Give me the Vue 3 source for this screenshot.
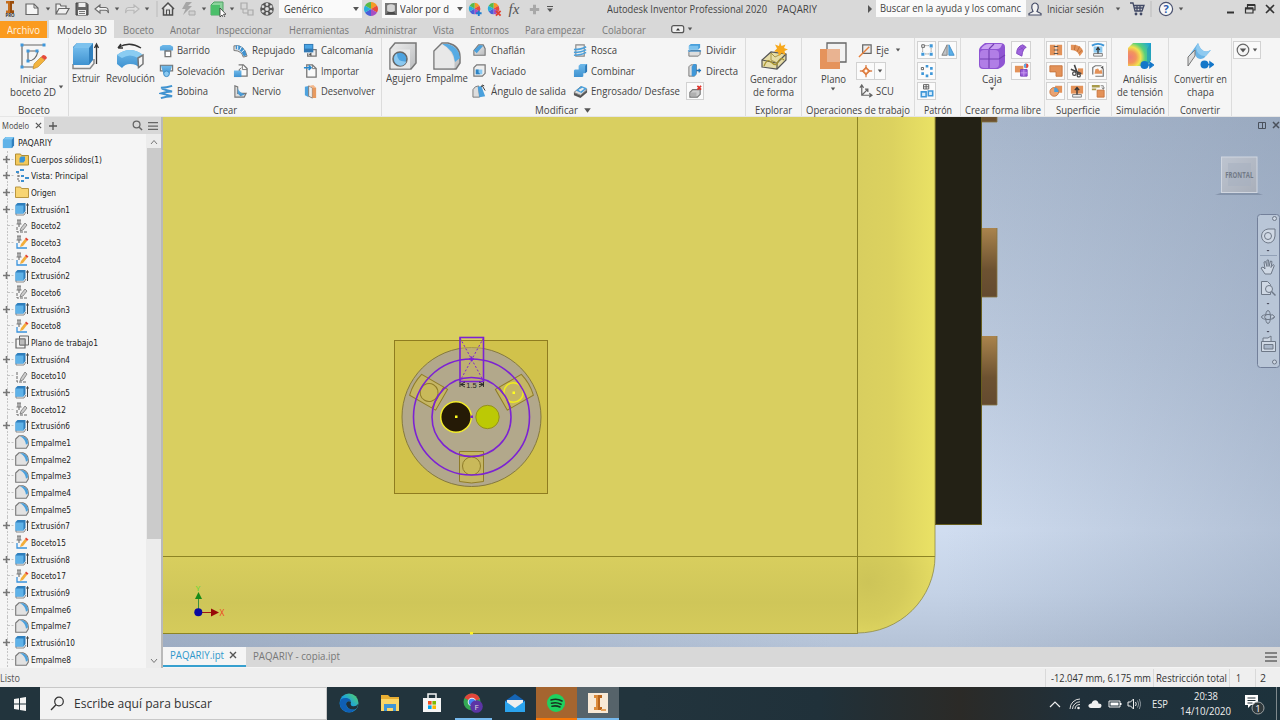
<script setup>
const vFit = {
  mounted(el, { value }) {
    const range = document.createRange()
    range.selectNodeContents(el)
    const natural = range.getBoundingClientRect().width
    if (!natural) return
    el.style.width = value + 'px'
    el.style.transform = `scaleX(${value / natural})`
  },
}

const quickLeft = [
  ['logo', 16], ['page', 16], ['caret', 6], ['folder', 16], ['save', 16], ['undo', 16], ['caret', 6],
  ['redo', 16], ['caret', 6], ['sep', 2], ['home', 16], ['flash', 16], ['caret', 6], ['select', 16],
  ['caret', 6], ['link', 16], ['ball', 16],
]
const tabs = [
  ['Boceto', 31], ['Anotar', 30], ['Inspeccionar', 56], ['Herramientas', 60], ['Administrar', 52],
  ['Vista', 21], ['Entornos', 39], ['Para empezar', 60], ['Colaborar', 44],
]
const createCols = [
  { k: 'c1', items: [['sweep', 'Barrido', 33], ['loft', 'Solevación', 48], ['coil', 'Bobina', 31]] },
  { k: 'c2', items: [['emboss', 'Repujado', 43], ['derive', 'Derivar', 32], ['rib', 'Nervio', 29]] },
  { k: 'c3', items: [['decal', 'Calcomanía', 52], ['import', 'Importar', 38], ['unwrap', 'Desenvolver', 54]] },
]
const modifyCols = [
  { k: 'm1', items: [['chamfer', 'Chaflán', 34], ['shell', 'Vaciado', 35], ['draft', 'Ángulo de salida', 75]] },
  { k: 'm2', items: [['thread', 'Rosca', 26], ['combine', 'Combinar', 44], ['thicken', 'Engrosado/ Desfase', 89]] },
]
const surface = ['stitch', 'ruled', 'extend', 'patch', 'trim', 'replace', 'sculpt', 'fitface', 'repair']

const widths = { Boceto: 30, Extrusión: 39, Empalme: 40 }
const fitWidth = (name) => {
  const m = name.match(/^(\D+?)(\d+)$/)
  return widths[m[1]] + (m[2].length - 1) * 5
}
const row = (name, icon, plus) => ({ name, icon, plus, w: fitWidth(name) })
const e = (n) => row('Extrusión' + n, 'extrude-s', true)
const f = (n) => row('Empalme' + n, 'fillet-s', false)
const b = (n, icon) => row('Boceto' + n, icon, false)
const tree = [
  { name: 'Cuerpos sólidos(1)', icon: 'solids', plus: true, w: 71 },
  { name: 'Vista: Principal', icon: 'views', plus: true, w: 57 },
  { name: 'Origen', icon: 'folder-y', plus: true, w: 25 },
  e(1), b(2, 'sk-gray'), b(3, 'sk-color'), b(4, 'sk-color'), e(2), b(6, 'sk-gray'), e(3), b(8, 'sk-color'),
  { name: 'Plano de trabajo1', icon: 'wplane', plus: false, w: 67 },
  e(4), b(10, 'sk-plain'), e(5), b(12, 'sk-gray'), e(6), f(1), f(2), f(3), f(4), f(5), e(7),
  b(15, 'sk-color'), e(8), b(17, 'sk-color'), e(9), f(6), f(7), e(10), f(8),
]
const apps = [
  { i: 'edge' }, { i: 'explorer' }, { i: 'store' }, { i: 'chrome', c: 'run', badge: 'F' }, { i: 'mail' },
  { i: 'spotify', c: 'alert' }, { i: 'inventor', c: 'active' },
]
</script>

<template>
  <div class="app">
    <svg class="defs" width="0" height="0" aria-hidden="true">
      <defs>
        <linearGradient id="gBlue" x1="0" y1="0" x2="0" y2="1"><stop offset="0" stop-color="#6fb9ea" /><stop offset="1" stop-color="#3f92d0" /></linearGradient>
        <linearGradient id="gGray" x1="0" y1="0" x2="1" y2="1"><stop offset="0" stop-color="#eeeeee" /><stop offset="1" stop-color="#b9bbbd" /></linearGradient>
        <radialGradient id="gRain" cx=".1" cy=".62" r="1"><stop offset="0" stop-color="#ee7d78" /><stop offset=".25" stop-color="#f3955c" /><stop offset=".45" stop-color="#f2e34f" /><stop offset=".65" stop-color="#57d07c" /><stop offset="1" stop-color="#1fa6d6" /></radialGradient>
        <linearGradient id="gEdge" x1="0" y1="1" x2="1" y2="0"><stop offset="0" stop-color="#1169c0" /><stop offset=".5" stop-color="#1ba1dd" /><stop offset="1" stop-color="#5bd65c" /></linearGradient>
        <symbol id="i-wheelbase" viewBox="0 0 16 16">
          <path d="M8 8V1a7 7 0 0 1 6 3.500z" fill="#f59a23" /><path d="M8 8l6-3.500a7 7 0 0 1 0 7z" fill="#e84a3c" /><path d="M8 8l6 3.500A7 7 0 0 1 8 15z" fill="#a64fc4" /><path d="M8 8v7a7 7 0 0 1-6-3.500z" fill="#4a5fd8" /><path d="M8 8l-6 3.500a7 7 0 0 1 0-7z" fill="#28aedb" /><path d="M8 8L2 4.500A7 7 0 0 1 8 1z" fill="#58b947" />
        </symbol>
      </defs>
      <symbol id="i-logo" viewBox="0 0 16 18"><path d="M4 1h8v2.500h-2v7h2V13H4v-2.500h2v-7H4z" fill="#c46d1c" /><path d="M8 1h4v2.500h-2v7h2V13H8z" fill="#9a4d0c" /></symbol>
      <symbol id="i-page" viewBox="0 0 16 16"><path d="M2 3h8l4 4v6.500H2z" fill="#f5f5f5" stroke="#666" stroke-width="1.200" /><path d="M10 3v4h4" fill="none" stroke="#666" /></symbol>
      <symbol id="i-caret" viewBox="0 0 6 6"><path d="M.8 1.500h4.400L3 4.500z" fill="#555" /></symbol>
      <symbol id="i-folder" viewBox="0 0 16 16"><path d="M2 13V3h4l1 2h5v2.500M2 13L5 7.500h10L12 13z" fill="#f0f0f0" stroke="#666" stroke-width="1.200" /></symbol>
      <symbol id="i-save" viewBox="0 0 16 16"><path d="M2 2h10.500L14 3.500V14H2z" fill="#666" stroke="#444" /><path d="M4.500 2h7v4h-7zM4 9h8v5H4z" fill="#eee" /><path d="M5 10.500h6M5 12.500h6" stroke="#777" /></symbol>
      <symbol id="i-undo" viewBox="0 0 16 16"><path d="M1 8l5-4v2.500h5.500q3 0 3 5.500-1-2.800-3-2.800H6V12z" fill="#f3f3f3" stroke="#6b6b6b" stroke-width="1.100" /></symbol>
      <symbol id="i-redo" viewBox="0 0 16 16"><path d="M15 8l-5-4v2.500H4.500q-3 0-3 5.500 1-2.800 3-2.800H10V12z" fill="#e0e0e0" stroke="#b5b5b5" stroke-width="1.100" /></symbol>
      <symbol id="i-sep" viewBox="0 0 2 16"><path d="M1 0v16" stroke="#bbb" /></symbol>
      <symbol id="i-home" viewBox="0 0 16 16"><path d="M2 8l6-6 6 6M3.500 7.500V14h9V7.500" fill="#e9e9e9" stroke="#4d4d4d" stroke-width="1.500" /><path d="M6.500 14V9h3v5" fill="none" stroke="#4d4d4d" stroke-width="1.200" /></symbol>
      <symbol id="i-flash" viewBox="0 0 16 16"><path d="M6 1h6L8 5h4l-9 9 2.500-6H2z" fill="#a6a6a6" /><path d="M9 10h6v4H9z" fill="#d0d0d0" stroke="#aaa" /></symbol>
      <symbol id="i-select" viewBox="0 0 16 16"><path d="M1 4l3-3h9v10l-3 3H1z" fill="#8bd39c" stroke="#4ea265" /><path d="M1 4h9v10H1z" fill="#4cbf6b" /><path d="M10 7v9l2-2 1.500 3 1.500-.7-1.500-3H16z" fill="#fff" stroke="#333" stroke-width=".8" /></symbol>
      <symbol id="i-link" viewBox="0 0 16 16"><path d="M2 2h6v6H2zM9 9h5v5H9z" fill="#d7d7d7" stroke="#a5a5a5" stroke-width="1.200" /><path d="M4 8v4h5" fill="none" stroke="#a5a5a5" /></symbol>
      <symbol id="i-ball" viewBox="0 0 16 16"><circle cx="8" cy="8" r="6.800" fill="#555" /><g fill="#ddd"><circle cx="8" cy="8" r="1.900" /><circle cx="8" cy="3.500" r="1.400" /><circle cx="8" cy="12.500" r="1.400" /><circle cx="4" cy="5.700" r="1.400" /><circle cx="12" cy="5.700" r="1.400" /><circle cx="4" cy="10.300" r="1.400" /><circle cx="12" cy="10.300" r="1.400" /></g></symbol>
      <symbol id="i-wheel" viewBox="0 0 16 16"><use href="#i-wheelbase" /></symbol>
      <symbol id="i-wheelplus" viewBox="0 0 16 16"><use href="#i-wheelbase" width="14" height="14" /><path d="M11.500 9v6M8.500 12h6" stroke="#1c7bd0" stroke-width="2" /></symbol>
      <symbol id="i-wheelx" viewBox="0 0 16 16"><use href="#i-wheelbase" width="14" height="14" /><path d="M9.500 9.500l5 5m0-5l-5 5" stroke="#e2402f" stroke-width="2" /></symbol>
      <symbol id="i-plus" viewBox="0 0 16 16"><path d="M8 3v10M3 8h10" stroke="#a8a8a8" stroke-width="3.200" /></symbol>
      <symbol id="i-caretbar" viewBox="0 0 8 8"><path d="M1 1.500h6" stroke="#555" /><path d="M1 3.500h6L4 7z" fill="#555" /></symbol>
      <symbol id="i-material" viewBox="0 0 14 14"><path d="M0 0h14v14H0z" fill="#777" /><path d="M2.500 3q4.500-3 9 0v6q-4.500 3-9 0z" fill="#d5d5d5" /><path d="M1 13.500l2.500-3h7l2.500 3z" fill="#4a4a4a" /></symbol>
      <symbol id="i-user" viewBox="0 0 16 16"><path d="M2 14v-1.500l4-2Q4 7 5 4q3-4 6 0 1 3-1 6.500l4 2V14z" fill="#f2f2f2" stroke="#444b66" stroke-width="1.200" /></symbol>
      <symbol id="i-cart" viewBox="0 0 16 16"><path d="M1 2h3l2 8h7l2-5.500H5M5 7h9M8 5v5m3-5v5" fill="none" stroke="#424a66" stroke-width="1.300" /><circle cx="7" cy="13" r="1.400" fill="#424a66" /><circle cx="12" cy="13" r="1.400" fill="#424a66" /></symbol>
      <symbol id="i-help" viewBox="0 0 16 16"><circle cx="8" cy="8" r="6.600" fill="#f8f8f8" stroke="#4a5270" stroke-width="1.200" /></symbol>
      <symbol id="i-min" viewBox="0 0 12 12"><path d="M3 9.500h7" stroke="#333" stroke-width="2" /></symbol>
      <symbol id="i-restore" viewBox="0 0 12 12"><path d="M3.500 5V2h7.500v5H9M1.500 5h7.500v5H1.500z" fill="none" stroke="#333" stroke-width="1.200" /><path d="M3 2h8M1 5.500h8" stroke="#333" stroke-width="2" /></symbol>
      <symbol id="i-x" viewBox="0 0 12 12"><path d="M2 2l8 8m0-8l-8 8" stroke="#333" stroke-width="1.600" /></symbol>
      <symbol id="i-xs" viewBox="0 0 8 8"><path d="M1 1l6 6m0-6L1 7" stroke="#555" stroke-width="1.400" /></symbol>
      <symbol id="i-min-ribbon" viewBox="0 0 14 9"><rect x=".7" y=".7" width="12" height="7" rx="2" fill="#eee" stroke="#555" stroke-width="1.200" /><path d="M5 5.500h4L7 3z" fill="#333" /></symbol>
      <symbol id="i-sketch" viewBox="0 0 28 28"><g fill="none" stroke="#666" stroke-width="1.200"><path d="M3 3h22M3 3v22h14" /><path d="M9 9h8M9 9v10q8 0 10-10" /></g><g fill="#3f97dc"><path d="M1.500 1.500h3v3h-3zM23.500 1.500h3v3h-3zM1.500 23.500h3v3h-3zM7.500 7.500h3v3h-3zM16.500 7.500h3v3h-3zM7.500 17.500h3v3h-3z" /></g><path d="M22 15l4 3-7 7-5 2 1-5z" fill="#f3b33d" stroke="#b98427" stroke-width=".6" /><path d="M22 15l2-2q3 0 4 3l-2 2z" fill="#e64b3c" /></symbol>
      <symbol id="i-extrude" viewBox="0 0 28 28"><path d="M1 22v4.500h17l4-5V17" fill="#f5f5f5" stroke="#888" stroke-width="1.500" /><path d="M1 5l4-4h16v17l-4 5H1z" fill="#2f7fbd" /><path d="M1 6h16v17H1z" fill="url(#gBlue)" /><path d="M1 6l4-5h16l-4 5z" fill="#7cc2ee" /><path d="M24.500 22V3m-2 3l2-4 2 4" fill="none" stroke="#333" stroke-width="1.300" /></symbol>
      <symbol id="i-revolve" viewBox="0 0 28 28"><path d="M1 13q13-10 26 0v9l-4 4q-2-4-9-4-5 0-8 4l-5-4z" fill="url(#gBlue)" /><path d="M1 13q13-10 26 0l-5 3q-8-5-16 0z" fill="#8accf2" /><path d="M22 16l5-3v9l-4.500 3.500z" fill="#f5f5f5" stroke="#777" stroke-width="1.500" /><path d="M3 5q11-6 22 1M2 6l3-4m-3 4h5" fill="none" stroke="#333" stroke-width="1.400" /></symbol>
      <symbol id="i-sweep" viewBox="0 0 16 16"><path d="M1 4l3-2h8l3 2v4H9v5l-3-1V8H1z" fill="url(#gBlue)" /><path d="M6.500 8.500h6v6h-6z" fill="#fff" stroke="#777" stroke-width="1.400" /></symbol>
      <symbol id="i-loft" viewBox="0 0 16 16"><path d="M1.500 2.500h13v6h-13z" fill="#eee" stroke="#777" stroke-width="1.300" /><path d="M2 3h12l-3 9H5z" fill="url(#gBlue)" /><circle cx="8" cy="11.500" r="3" fill="#8bcaf2" stroke="#3b88c2" /></symbol>
      <symbol id="i-coil" viewBox="0 0 16 16"><path d="M2 4q6 0 12-2M3 5q5 2 11 3Q8 8 2 10q5 1 12 3-6 0-12 2" fill="none" stroke="#3f92d0" stroke-width="2" /></symbol>
      <symbol id="i-emboss" viewBox="0 0 16 16"><path d="M1 3Q12 1 15 14l-4 1Q9 8 1 8z" fill="#ddd" stroke="#777" /><path d="M3 2.500q9 0 11.500 10.500l-3 1Q8 7 3 6.500z" fill="#3f92d0" /><path d="M5 3v4m4-3L7 8m5-1l-3 3" stroke="#fff" /></symbol>
      <symbol id="i-derive" viewBox="0 0 16 16"><path d="M6 2h5l4 4v8H7V7" fill="#fafafa" stroke="#777" stroke-width="1.400" /><path d="M1 8h8v7H1z" fill="url(#gBlue)" /><path d="M9 5l-3 2.500M10 2v5h5" stroke="#777" fill="none" /></symbol>
      <symbol id="i-rib" viewBox="0 0 16 16"><path d="M2 2l3 1v7h9l-2 4H2z" fill="#ddd" stroke="#777" stroke-width="1.200" /><path d="M5 4q1 5 8 7l-5 2-3-3z" fill="url(#gBlue)" /></symbol>
      <symbol id="i-decal" viewBox="0 0 16 16"><path d="M8 7h6v7H5v-3" fill="#eee" stroke="#777" stroke-width="1.400" /><path d="M1 1h10v9H1z" fill="#3178b3" /><path d="M2 2h8v4H2z" fill="#4aa4e4" /><path d="M6 12l3-2v4z" fill="#555" /></symbol>
      <symbol id="i-import" viewBox="0 0 16 16"><path d="M4 2h6l4 4v9H4z" fill="#fafafa" stroke="#777" stroke-width="1.400" /><path d="M10 2v4h4" fill="none" stroke="#777" /><path d="M1 5h7M6 2.500L8.500 5 6 7.500" fill="none" stroke="#2588d0" stroke-width="1.700" /></symbol>
      <symbol id="i-unwrap" viewBox="0 0 16 16"><path d="M2 3l4-1v12l-4-2z" fill="#4ea3df" /><path d="M6 2l4 2v11l-4-2z" fill="#eee" stroke="#777" /><path d="M10 3l4 1v11h-4z" fill="#e79a60" /><path d="M6 2l5-1 3 3H10z" fill="#f3b88d" /></symbol>
      <symbol id="i-hole" viewBox="0 0 28 28"><path d="M1 7l5-6h21v20l-5 6H1z" fill="url(#gGray)" stroke="#777" stroke-width="1.500" /><path d="M1.700 7.500H21v19H1.700z" fill="#e9e9e9" /><circle cx="11" cy="17" r="7" fill="#4ea3df" stroke="#666" stroke-width="1.500" /><path d="M8 11.500q0 9 9.500 8-2 5-7.500 4-5-2-5-7 .5-4 3-5z" fill="#8cc9f0" /></symbol>
      <symbol id="i-fillet" viewBox="0 0 28 28"><path d="M1 9l8-8h6q12 3 12 14v6l-4 6H1z" fill="url(#gGray)" stroke="#777" stroke-width="1.500" /><path d="M9 2h6q11 3 12 14l-5 4Q21 8 9 2z" fill="#56abe4" /><path d="M1.700 9.500L9 2.500Q20 9 21.500 20v6.300H1.700z" fill="#e8e8e8" /></symbol>
      <symbol id="i-chamfer" viewBox="0 0 16 16"><path d="M2 8l5-6h5l2 4v7H2z" fill="url(#gGray)" stroke="#777" stroke-width="1.200" /><path d="M2 8l6-6 4 1-7 8z" fill="#4aa0dc" /></symbol>
      <symbol id="i-shell" viewBox="0 0 16 16"><path d="M2 5l3-3h9v9l-3 3H2z" fill="#eee" stroke="#777" stroke-width="1.300" /><path d="M4 7h7v5H4z" fill="#8bcaf2" /><path d="M4 7h3v3l2 2H4z" fill="#2d83c4" /></symbol>
      <symbol id="i-draft" viewBox="0 0 16 16"><path d="M1 14V6q2-4 6-4l1 12z" fill="#ddd" stroke="#777" /><path d="M6 3l4-1 4 11-6 1z" fill="#4aa0dc" /><path d="M11 2l3 5M10 3l1-2 2 1" stroke="#333" fill="none" /></symbol>
      <symbol id="i-thread" viewBox="0 0 16 16"><path d="M3 2h9v12H3z" fill="#eee" stroke="#888" stroke-width="1.200" /><path d="M1 7q8 0 13-3M1 10q8 0 13-3M1 13q8 0 13-3" stroke="#4aa0dc" stroke-width="1.700" fill="none" /></symbol>
      <symbol id="i-combine" viewBox="0 0 16 16"><path d="M6 3l2-2h7v8l-2 2h-2v3l-1 1H1V8l1-1h4z" fill="url(#gBlue)" /><path d="M13 3v8l2-2V1z" fill="#2b77b5" /></symbol>
      <symbol id="i-thicken" viewBox="0 0 16 16"><path d="M1 9l7-6 7 3v3l-7 6-7-3z" fill="#555" /><path d="M1 9l7-6 7 3-7 6z" fill="#ddd" stroke="#888" /><path d="M3 7l6-5 6 2.500-6 5z" fill="#4aa0dc" /><path d="M6 6l4-2 2 1-4 3z" fill="#eee" /></symbol>
      <symbol id="i-split" viewBox="0 0 16 16"><path d="M2 3l2-2h10v4l-2 2H2z" fill="#4aa0dc" /><path d="M2 3h10v4H2z" fill="#7cc2ee" /><path d="M2 10l2-2h10v4l-2 2H2z" fill="#ddd" stroke="#777" /><path d="M1 8.500h14" stroke="#3a8ac8" stroke-width="1.400" /></symbol>
      <symbol id="i-direct" viewBox="0 0 16 16"><path d="M2 4l2-2h6v9l-2 3H2z" fill="#ddd" stroke="#777" /><path d="M5 4l2-3h3v11l-2 2H5z" fill="#3f97d8" /><path d="M10 8h5m-2-2v4" stroke="#1b72b8" stroke-width="1.400" /></symbol>
      <symbol id="i-delface" viewBox="0 0 16 16"><path d="M2 9l3-3h8v5l-3 3H2z" fill="#ccc" stroke="#777" stroke-width="1.200" /><path d="M3 9h6v4H3z" fill="#b0b0b0" /><path d="M10 2l4 4m0-4l-4 4" stroke="#e0322a" stroke-width="1.700" /></symbol>
      <symbol id="i-shapegen" viewBox="0 0 28 28"><path d="M2 18l9-8 15 2v6l-9 9L2 25z" fill="#e6dca6" stroke="#555" stroke-width="1.200" /><path d="M2 18l15 3 9-9M17 21v6" fill="none" stroke="#555" stroke-width="1.200" /><path d="M4 24q3-8 7-4t6 2q3-8 7-4" fill="none" stroke="#a8932f" stroke-width="1.300" /><path d="M11 11l4 4 6-3M11 11v7l6 3" stroke="#a99645" fill="none" /><path d="M20 0l1.500 4 4-1.500L24 6l4 1.500L24.500 9l1 4-4-2-2.500 3-1-4-4-.5 3-3-2-4 4 1.500z" fill="#f7a81b" /></symbol>
      <symbol id="i-plane" viewBox="0 0 28 28"><path d="M8 1h19v19H8z" fill="#f2f2f2" stroke="#666" stroke-width="1.300" /><path d="M1 7h20v20H1z" fill="#e5935c" /><path d="M8 7h13v13H8z" fill="#e9b391" /></symbol>
      <symbol id="i-axis" viewBox="0 0 16 16"><path d="M5 2h9v9H5z" fill="#eee" stroke="#666" stroke-width="1.300" /><path d="M1 15L12 4" stroke="#e5803c" stroke-width="1.500" /></symbol>
      <symbol id="i-point" viewBox="0 0 16 16"><path d="M8 1v14M1 8h14" stroke="#dc8450" stroke-width="1.500" /><path d="M8 4l4 4-4 4-4-4z" fill="#f1b48b" stroke="#dc7738" stroke-width="1.500" /><circle cx="8" cy="8" r="1.300" fill="#fff" /></symbol>
      <symbol id="i-ucs" viewBox="0 0 16 16"><path d="M4 2v10h10M4 12l6-6M2 4l2-3 2 3m6 6l3 2-3 2M7.500 5.500h3v3" fill="none" stroke="#666" stroke-width="1.300" /></symbol>
      <symbol id="i-patrect" viewBox="0 0 16 16"><path d="M2 2h3v3H2z" fill="none" stroke="#555" /><path d="M6 3h4M3 6v4m3 2.500h4M12.700 6v4" stroke="#777" stroke-dasharray="1.500 1" /><path d="M11 1.500h3.500V5H11zM1.500 11H5v3.500H1.500zM11 11h3.500v3.500H11z" fill="#3f97d8" /></symbol>
      <symbol id="i-mirror" viewBox="0 0 16 16"><path d="M7 2v12H1z" fill="#bfc2c5" stroke="#777" /><path d="M9 2v12h6z" fill="#5cb0e8" stroke="#3a8cc9" /></symbol>
      <symbol id="i-patcirc" viewBox="0 0 16 16"><g fill="#3f97d8"><path d="M6.500 1h3v3h-3zM6.500 12h3v3h-3zM11.500 3.500h3v3h-3zM11.500 9.500h3v3h-3zM1.500 9.500h3v3h-3z" /></g><path d="M1.500 4h2.500v2.500H1.500z" fill="none" stroke="#555" /></symbol>
      <symbol id="i-patsk" viewBox="0 0 16 16"><path d="M4 .7h6v5H4zM7 .7v5M4 3.200h6" fill="none" stroke="#555" /><path d="M1.500 9H7v5.500H1.500zM9.500 8h5v5.500h-5z" fill="#d8edfb" stroke="#3f97d8" stroke-width="1.800" /></symbol>
      <symbol id="i-box" viewBox="0 0 28 28"><path d="M1 8q0-3 6-7h15q5 0 5 4v15q0 4-7 7H5q-4 0-4-4z" fill="#8f55d3" /><rect x="2" y="8" width="19" height="18" rx="4" fill="#b17ee6" /><path d="M3 7q3-5 8-5h13q-1 5-5 5z" fill="#caa2f2" /><path d="M2 17h19l6-4M11 8v18m0-19l5-5" stroke="#7540b4" fill="none" stroke-width="1.200" /></symbol>
      <symbol id="i-face" viewBox="0 0 16 16"><path d="M3 12q0-8 7-10l4 3q-4 1-5 10z" fill="#a066de" stroke="#7d42bd" /><path d="M5 8q5-1 7-5M7 4l4 4" stroke="#7d42bd" fill="none" stroke-width=".7" /></symbol>
      <symbol id="i-convff" viewBox="0 0 16 16"><path d="M1 3h9v7H1z" fill="#e39259" /><path d="M7 7h7v7H7z" fill="#9a60da" stroke="#7840ba" /><path d="M7 10.500h7M10.500 7v7" stroke="#c79cf0" /><circle cx="13" cy="3" r="2.500" fill="#e9483c" /><path d="M13 .5a2.500 2.500 0 0 0 0 5z" fill="#5aaae8" /></symbol>
      <symbol id="i-stitch" viewBox="0 0 16 16"><path d="M1 2h14v12H1z" fill="#e39259" /><path d="M8 1v14" stroke="#f5f5f5" stroke-width="1.500" /><path d="M5.500 4h5m-5 4h5m-5 4h5" stroke="#555" stroke-width="1.400" /></symbol>
      <symbol id="i-ruled" viewBox="0 0 16 16"><path d="M1 2q12-1 14 8l-4 5Q9 8 1 8z" fill="#e39259" /><path d="M6 2L5 8m6-4L8 10m6-2l-4 4" stroke="#b76a33" /></symbol>
      <symbol id="i-extend" viewBox="0 0 16 16"><path d="M1 3q7-4 14 0" stroke="#3f97d8" stroke-width="2" fill="none" /><path d="M3 4h10v7H3z" fill="#8ac8ef" /><path d="M3 12h10v3H3z" fill="#eee" stroke="#777" /><path d="M8 12V5m-2 3l2-3 2 3" stroke="#333" fill="none" stroke-width="1.400" /></symbol>
      <symbol id="i-patch" viewBox="0 0 16 16"><path d="M1 2h14v12H8V9H1z" fill="#e39259" stroke="#c7733b" /></symbol>
      <symbol id="i-trim" viewBox="0 0 16 16"><path d="M9 5h6v7H9z" fill="#e39259" /><path d="M1 6l12 5M5 1l4 11" stroke="#444" stroke-width="1.800" /><circle cx="5" cy="11" r="2" fill="none" stroke="#444" stroke-width="1.400" /><circle cx="10" cy="13" r="1.800" fill="none" stroke="#444" stroke-width="1.400" /></symbol>
      <symbol id="i-replace" viewBox="0 0 16 16"><path d="M2 12V4l3-2h7M5 14h9V5" fill="none" stroke="#777" stroke-width="1.400" /><path d="M4 11l1-5 3-1 2 3 2-2 1 5z" fill="#e39259" /><path d="M11 4l3-2v4z" fill="#555" /></symbol>
      <symbol id="i-sculpt" viewBox="0 0 16 16"><path d="M7 2h8v8H7z" fill="#e39259" /><circle cx="6" cy="9" r="5" fill="#e9a373" stroke="#c7733b" /><path d="M6 4a5 5 0 0 1 5 5H6z" fill="#4aa0dc" /></symbol>
      <symbol id="i-fitface" viewBox="0 0 16 16"><path d="M1 2h14v9H1z" fill="#e39259" /><path d="M3 12h10v3H3z" fill="#eee" stroke="#777" /><path d="M8 12V4M5.500 7L8 4l2.500 3" stroke="#333" fill="none" stroke-width="1.500" /></symbol>
      <symbol id="i-repair" viewBox="0 0 16 16"><path d="M1 1h9v3H1zM1 5h5v2H1z" fill="#a89a4a" /><path d="M7 7h8v8H7z" fill="#e39259" stroke="#c7733b" /><path d="M11 2h3v4m-1.500-2L14 6l1.500-2" stroke="#777" fill="none" /></symbol>
      <symbol id="i-stress" viewBox="0 0 28 28"><path d="M2 6l5-5h18v17l-4 6H2z" fill="url(#gRain)" /><path d="M21 7l4-6v17l-4 6z" fill="#1b96bb" opacity=".55" /><circle cx="18.500" cy="23" r="4" fill="#1477c9" /><path d="M22 23h4m-2-2.500l3.500 2.500-3.500 2.500z" stroke="#1477c9" stroke-width="1.500" fill="#1477c9" /></symbol>
      <symbol id="i-sheet" viewBox="0 0 28 28"><path d="M2 15L12 1q4 12 13 7l-7 8q-7 3-9-4l-7 12z" fill="#6ab4e6" /><path d="M12 1q4 12 13 7l-5 6q-8 1-10-8z" fill="#8fcaf0" /><path d="M2 24V15l7-7v6z" fill="#ddd" stroke="#777" /><circle cx="18.500" cy="22.500" r="4" fill="#1477c9" /><path d="M22 22.500h4m-2-2.500l3.500 2.500-3.500 2.500z" stroke="#1477c9" stroke-width="1.500" fill="#1477c9" /></symbol>
      <symbol id="i-downcirc" viewBox="0 0 14 14"><circle cx="7" cy="7" r="5.800" fill="#f5f5f5" stroke="#666" stroke-width="1.200" /><path d="M3.800 5.500h6.400L7 9.500z" fill="#555" /></symbol>
      <symbol id="i-cube" viewBox="0 0 14 14"><path d="M1 4l3-3h9v9l-2 3H1z" fill="#2f7fbd" /><path d="M1 4h9.500v9H1z" fill="#5fb2e8" /><path d="M1 4l3-3h9l-2.500 3z" fill="#7cc6f2" /></symbol>
      <symbol id="i-solids" viewBox="0 0 14 14"><path d="M.5 2h5l1 1.500h7V13H.5z" fill="#f3c95c" stroke="#b18d33" /><path d="M4.500 6l1.500-1.500h4v4L8.500 10.500h-4z" fill="#3894d6" /></symbol>
      <symbol id="i-folder-y" viewBox="0 0 14 14"><path d="M.5 2h5l1 1.500h7V12.500H.5z" fill="#f8d573" stroke="#b99640" /></symbol>
      <symbol id="i-views" viewBox="0 0 14 14"><path d="M3 3v9h3M3 7h4" fill="none" stroke="#666" stroke-dasharray="2 1" /><path d="M1 2h3v2H1zM5 0h4v2H5zM6 6h3v2H6zM10 8h4v2h-4zM6 11h3v2H6z" fill="#3c90d0" /></symbol>
      <symbol id="i-extrude-s" viewBox="0 0 14 14"><path d="M1 11v2h8l2-3" fill="none" stroke="#888" /><path d="M.5 3l2-2h8v8l-2 2.500h-8z" fill="#2f7fbd" /><path d="M.5 3.500h8v8h-8z" fill="#5fb2e8" /><path d="M12.500 12V2m-1 1.500l1-2 1 2" stroke="#444" fill="none" /></symbol>
      <symbol id="i-sk-gray" viewBox="0 0 14 14"><path d="M2 1h4M3 1v4m2-4v4M1.500 5h5M4 5v3" stroke="#777" stroke-width="1.200" /><path d="M2 8v5h10" fill="none" stroke="#666" stroke-dasharray="3 1" /><path d="M10 4l2 2-4 5-3 1 1-3z" fill="#ccc" stroke="#777" stroke-width=".8" /></symbol>
      <symbol id="i-sk-color" viewBox="0 0 14 14"><path d="M2 1h4M3 1v4m2-4v4M1.500 5h5M4 5v3" stroke="#777" stroke-width="1.200" /><path d="M2 8v5h10" fill="none" stroke="#3a93dc" stroke-width="1.300" /><path d="M10 4l2 2-4 5-3 1 1-3z" fill="#f2ad3b" /><path d="M10 4l1-1.500 2.500 2L12 6z" fill="#e4432f" /></symbol>
      <symbol id="i-sk-plain" viewBox="0 0 14 14"><path d="M2 3v10h10" fill="none" stroke="#666" stroke-dasharray="3 1" /><path d="M10 3l2 2-4 6-3 1 1-3z" fill="#ccc" stroke="#777" stroke-width=".8" /></symbol>
      <symbol id="i-wplane" viewBox="0 0 14 14"><path d="M4.500 1h9v9h-9z" fill="#eee" stroke="#666" /><path d="M1 4h9v9H1z" fill="none" stroke="#666" stroke-width="1.200" /><path d="M4.500 4H10v6H4.500z" fill="#bbb" stroke="#777" /></symbol>
      <symbol id="i-fillet-s" viewBox="0 0 14 14"><path d="M.7 4L4 .8h4q5.300 2 5.300 7V10l-2 3.300H.7z" fill="#e2e2e2" stroke="#777" stroke-width="1.100" /><path d="M5 1.200h3q5 2 5 7l-2 1.500Q10.500 4 5 1.200z" fill="#4aa0dc" /></symbol>
      <symbol id="i-search" viewBox="0 0 12 12"><circle cx="5" cy="5" r="3.700" fill="none" stroke="#666" stroke-width="1.400" /><path d="M7.800 7.800L11 11" stroke="#666" stroke-width="1.600" /></symbol>
      <symbol id="i-bars" viewBox="0 0 12 12"><path d="M0 2h12M0 6h12M0 10h12" stroke="#666" stroke-width="1.500" /></symbol>
      <symbol id="i-edge" viewBox="0 0 20 20"><circle cx="10" cy="10" r="9.500" fill="url(#gEdge)" /><path d="M1 12Q0 4 8 5q4 1 4 4-4-2-5 2 0 6 9 5.500Q12 21 6 18 2 16 1 12z" fill="#0f5fb5" /><path d="M12 9q-1 3 1 4 4 1 6-2 0 4-3 5.500-8 .5-9-5.500 1-4 5-2z" fill="#20303a" /></symbol>
      <symbol id="i-explorer" viewBox="0 0 20 20"><path d="M1 2h7l2 2h9v14H1z" fill="#e9ae32" /><path d="M1 6h18v12H1z" fill="#fbd667" /><path d="M4 18v-7h12v7h-3v-3H7v3z" fill="#3f95d6" /></symbol>
      <symbol id="i-store" viewBox="0 0 20 20"><path d="M6 5V1h8v4" fill="none" stroke="#f5f5f5" stroke-width="1.500" /><path d="M1 5h18v14H1z" fill="#f5f5f5" /><path d="M6 8h3.600v3.600H6z" fill="#f25022" /><path d="M10.400 8H14v3.600h-3.600z" fill="#7fba00" /><path d="M6 12.400h3.600V16H6z" fill="#00a4ef" /><path d="M10.400 12.400H14V16h-3.600z" fill="#ffb900" /></symbol>
      <symbol id="i-chrome" viewBox="0 0 20 20"><circle cx="9" cy="9" r="8.500" fill="#34a853" /><path d="M9 9L1.500 5A8.500 8.500 0 0 1 17 6z" fill="#e2453a" /><path d="M9 9h8.500A8.500 8.500 0 0 1 9 17.500z" fill="#f6c02f" /><circle cx="9" cy="9" r="4.300" fill="#eee" /><circle cx="9" cy="9" r="3.300" fill="#4285f4" /><circle cx="13.500" cy="13.500" r="6.300" fill="#5c35a5" /></symbol>
      <symbol id="i-mail" viewBox="0 0 20 20"><path d="M0 8l10-7 10 7v11H0z" fill="#1565b5" /><path d="M2 7h16v8H2z" fill="#eee" /><path d="M0 8l10 7 10-7v11H0z" fill="#2ba4ee" /></symbol>
      <symbol id="i-spotify" viewBox="0 0 20 20"><circle cx="10" cy="10" r="9" fill="#1fd15f" /><path d="M5 7q6-2 11 1M5.500 10.300q5-1.500 9.500 1M6 13.300q4-1.200 8 .7" stroke="#173422" stroke-width="1.600" fill="none" stroke-linecap="round" /></symbol>
      <symbol id="i-inventor" viewBox="0 0 20 20"><path d="M0 0h20v20H0z" fill="#f8e9d6" /><path d="M6 2h8v3h-2v9h2v3H6v-3h2V5H6z" fill="#dd8b3a" /><path d="M10 2h4v3h-2v9h2v3h-4z" fill="#b9641b" /><path d="M13 17h5" stroke="#e5a25a" stroke-width="2" /></symbol>
    </svg>

    <header class="title">
      <div class="quick">
        <svg v-for="(q, n) in quickLeft" :key="n" :class="['ic', 'q-' + q[0]]" :width="q[1]" :height="q[1] < 16 && q[0] !== 'sep' ? 6 : q[0] === 'logo' ? 18 : 16"><use :href="'#i-' + q[0]" /><text v-if="q[0] === 'logo'" x="3.500" y="17.200" class="pro" textLength="9">PRO</text></svg>
        <div class="combo"><span v-fit="39">Genérico</span><svg class="ic" width="8" height="8"><use href="#i-caret" /></svg></div>
        <svg class="ic" width="16" height="16"><use href="#i-wheel" /></svg>
        <div class="combo mat"><svg class="ic" width="12" height="12"><use href="#i-material" /></svg><span v-fit="49">Valor por d</span><svg class="ic" width="8" height="8"><use href="#i-caret" /></svg></div>
        <svg class="ic" width="15" height="15"><use href="#i-wheelplus" /></svg>
        <svg class="ic" width="15" height="15"><use href="#i-wheelx" /></svg>
        <i class="fx">fx</i>
        <svg class="ic" width="15" height="15"><use href="#i-plus" /></svg>
        <svg class="ic" width="8" height="8"><use href="#i-caretbar" /></svg>
      </div>
      <div class="docname"><span v-fit="160">Autodesk Inventor Professional 2020</span><span v-fit="40">PAQARIY</span></div>
      <svg class="ic tri" width="6" height="8"><path d="M1 0l4 4-4 4z" fill="#555" /></svg>
      <div class="help-search"><span v-fit="141">Buscar en la ayuda y los comanc</span></div>
      <div class="account">
        <svg class="ic" width="16" height="16"><use href="#i-user" /></svg>
        <span v-fit="57">Iniciar sesión</span>
        <svg class="ic" width="6" height="6"><use href="#i-caret" /></svg>
        <svg class="ic" width="16" height="16"><use href="#i-cart" /></svg>
        <svg class="ic" width="2" height="16"><use href="#i-sep" /></svg>
        <svg class="ic" width="16" height="16"><use href="#i-help" /><text x="8" y="12" class="q">?</text></svg>
        <svg class="ic" width="6" height="6"><use href="#i-caret" /></svg>
        <svg class="ic min" width="12" height="12"><use href="#i-min" /></svg>
        <svg class="ic" width="12" height="12"><use href="#i-restore" /></svg>
        <svg class="ic" width="12" height="12"><use href="#i-x" /></svg>
      </div>
    </header>

    <nav class="tabs">
      <div class="file"><span v-fit="33">Archivo</span></div>
      <div class="on"><span v-fit="50">Modelo 3D</span></div>
      <div class="rest">
        <span v-for="t in tabs" :key="t[0]" v-fit="t[1]">{{ t[0] }}</span>
        <svg class="ic rb" width="14" height="9"><use href="#i-min-ribbon" /></svg>
        <svg class="ic rc" width="6" height="6"><use href="#i-caret" /></svg>
      </div>
    </nav>

    <section class="ribbon">
      <div class="panel p-sketch">
        <div class="body">
          <div class="big"><svg class="ic" width="28" height="28"><use href="#i-sketch" /></svg><span v-fit="27">Iniciar</span><span v-fit="46">boceto 2D</span></div>
          <svg class="ic sc" width="6" height="6"><use href="#i-caret" /></svg>
        </div>
        <div class="label"><span v-fit="32">Boceto</span></div>
      </div>
      <div class="panel p-create">
        <div class="body">
          <div class="big one"><svg class="ic" width="28" height="28"><use href="#i-extrude" /></svg><span v-fit="28">Extruir</span></div>
          <div class="big one"><svg class="ic" width="28" height="28"><use href="#i-revolve" /></svg><span v-fit="49">Revolución</span></div>
          <div v-for="c in createCols" :key="c.k" :class="['col', c.k]">
            <div v-for="i in c.items" :key="i[1]" class="cmd"><svg class="ic" width="15" height="15"><use :href="'#i-' + i[0]" /></svg><span v-fit="i[2]">{{ i[1] }}</span></div>
          </div>
        </div>
        <div class="label"><span v-fit="24">Crear</span></div>
      </div>
      <div class="panel p-modify">
        <div class="body">
          <div class="big one"><svg class="ic" width="28" height="28"><use href="#i-hole" /></svg><span v-fit="35">Agujero</span></div>
          <div class="big one"><svg class="ic" width="28" height="28"><use href="#i-fillet" /></svg><span v-fit="42">Empalme</span></div>
          <div v-for="c in modifyCols" :key="c.k" :class="['col', c.k]">
            <div v-for="i in c.items" :key="i[1]" class="cmd"><svg class="ic" width="15" height="15"><use :href="'#i-' + i[0]" /></svg><span v-fit="i[2]">{{ i[1] }}</span></div>
          </div>
          <div class="col">
            <div class="cmd"><svg class="ic" width="15" height="15"><use href="#i-split" /></svg><span v-fit="30">Dividir</span></div>
            <div class="cmd"><svg class="ic" width="15" height="15"><use href="#i-direct" /></svg><span v-fit="32">Directa</span></div>
            <div class="btn del"><svg class="ic" width="15" height="15"><use href="#i-delface" /></svg></div>
          </div>
        </div>
        <div class="label"><span v-fit="43">Modificar</span><svg class="ic" width="9" height="9"><use href="#i-caret" /></svg></div>
      </div>
      <div class="panel p-explore">
        <div class="body"><div class="big"><svg class="ic" width="28" height="28"><use href="#i-shapegen" /></svg><span v-fit="47">Generador</span><span v-fit="41">de forma</span></div></div>
        <div class="label"><span v-fit="37">Explorar</span></div>
      </div>
      <div class="panel p-work">
        <div class="body">
          <div class="big"><svg class="ic" width="28" height="28"><use href="#i-plane" /></svg><span v-fit="25">Plano</span><svg class="ic dn" width="6" height="6"><use href="#i-caret" /></svg></div>
          <div class="col">
            <div class="cmd"><svg class="ic" width="15" height="15"><use href="#i-axis" /></svg><span v-fit="13">Eje</span><svg class="ic ec" width="6" height="6"><use href="#i-caret" /></svg></div>
            <div class="split"><div><svg class="ic" width="14" height="14"><use href="#i-point" /></svg></div><div><svg class="ic" width="6" height="6"><use href="#i-caret" /></svg></div></div>
            <div class="cmd"><svg class="ic" width="15" height="15"><use href="#i-ucs" /></svg><span v-fit="18">SCU</span></div>
          </div>
        </div>
        <div class="label"><span v-fit="104">Operaciones de trabajo</span></div>
      </div>
      <div class="panel p-pattern">
        <div class="body grid2">
          <div class="btn"><svg class="ic" width="14" height="14"><use href="#i-patrect" /></svg></div>
          <div class="btn"><svg class="ic" width="14" height="14"><use href="#i-mirror" /></svg></div>
          <div class="btn first"><svg class="ic" width="14" height="14"><use href="#i-patcirc" /></svg></div>
          <div class="btn first"><svg class="ic" width="14" height="14"><use href="#i-patsk" /></svg></div>
        </div>
        <div class="label"><span v-fit="28">Patrón</span></div>
      </div>
      <div class="panel p-free">
        <div class="body">
          <div class="big"><svg class="ic" width="28" height="28"><use href="#i-box" /></svg><span v-fit="20">Caja</span><svg class="ic dn" width="6" height="6"><use href="#i-caret" /></svg></div>
          <div class="col">
            <div class="btn"><svg class="ic" width="14" height="14"><use href="#i-face" /></svg></div>
            <div class="btn"><svg class="ic" width="15" height="15"><use href="#i-convff" /></svg></div>
          </div>
        </div>
        <div class="label"><span v-fit="76">Crear forma libre</span></div>
      </div>
      <div class="panel p-surface">
        <div class="body grid3"><div v-for="s in surface" :key="s" class="btn"><svg class="ic" width="14" height="14"><use :href="'#i-' + s" /></svg></div></div>
        <div class="label"><span v-fit="44">Superficie</span></div>
      </div>
      <div class="panel p-sim">
        <div class="body"><div class="big"><svg class="ic" width="28" height="28"><use href="#i-stress" /></svg><span v-fit="34">Análisis</span><span v-fit="46">de tensión</span></div></div>
        <div class="label"><span v-fit="49">Simulación</span></div>
      </div>
      <div class="panel p-conv">
        <div class="body"><div class="big"><svg class="ic" width="28" height="28"><use href="#i-sheet" /></svg><span v-fit="53">Convertir en</span><span v-fit="27">chapa</span></div></div>
        <div class="label"><span v-fit="40">Convertir</span></div>
      </div>
      <div class="more"><svg class="ic" width="14" height="14"><use href="#i-downcirc" /></svg><svg class="ic" width="6" height="6"><use href="#i-caret" /></svg></div>
    </section>

    <main class="work">
      <aside class="browser">
        <div class="bhead">
          <div class="btab"><span v-fit="27">Modelo</span><svg class="ic" width="7" height="7"><use href="#i-xs" /></svg></div>
          <svg class="ic" width="8" height="8"><path d="M4 0v8M0 4h8" stroke="#555" stroke-width="1.300" /></svg>
          <i class="grow"></i>
          <svg class="ic" width="11" height="11"><use href="#i-search" /></svg>
          <svg class="ic" width="10" height="10"><use href="#i-bars" /></svg>
        </div>
        <div class="bbody">
          <div class="tree">
            <div class="node root"><svg class="ic" width="13" height="13"><use href="#i-cube" /></svg><span v-fit="34">PAQARIY</span></div>
            <div v-for="t in tree" :key="t.name" class="node">
              <svg class="ic twig" width="15" height="17"><path d="M7.500 0v17M8 8.500h6" stroke="#c4c4c4" stroke-dasharray="2 1.500" /><path v-if="t.plus" d="M6.500 5v7M3 8.500h7" stroke="#777" stroke-width="1.600" /></svg>
              <svg class="ic" width="14" height="14"><use :href="'#i-' + t.icon" /></svg>
              <span v-fit="t.w">{{ t.name }}</span>
            </div>
          </div>
          <div class="scroll">
            <svg class="ic" width="8" height="6"><path d="M1 5l3-3.500L7 5" fill="none" stroke="#777" /></svg>
            <div class="thumb"></div>
            <svg class="ic" width="8" height="6"><path d="M1 1l3 3.500L7 1" fill="none" stroke="#777" /></svg>
          </div>
        </div>
      </aside>

      <section class="stage">
        <svg class="view" viewBox="163 117 1117 530" width="1117" height="530">
          <defs>
            <linearGradient id="sky" x1="0" y1="0" x2="0" y2="1"><stop offset="0" stop-color="#a9b8cd" /><stop offset=".45" stop-color="#bdcbdf" /><stop offset=".78" stop-color="#d0ddf0" /><stop offset=".9" stop-color="#c4d2e6" /><stop offset="1" stop-color="#b5c3d7" /></linearGradient>
            <linearGradient id="skyx" gradientUnits="userSpaceOnUse" x1="163" y1="0" x2="1280" y2="0"><stop offset="0" stop-color="#7f90a9" stop-opacity=".45" /><stop offset=".6" stop-color="#7f90a9" stop-opacity="0" /><stop offset=".7" stop-color="#7f90a9" stop-opacity="0" /><stop offset="1" stop-color="#7f90a9" stop-opacity=".36" /></linearGradient>
            <linearGradient id="right" x1="0" x2="1" y1="0" y2="0"><stop offset="0" stop-color="#d8ce5f" /><stop offset=".45" stop-color="#dcd25f" /><stop offset="1" stop-color="#eae265" /></linearGradient>
            <linearGradient id="low" x1="0" x2="0" y1="0" y2="1"><stop offset="0" stop-color="#d8ce5e" /><stop offset=".6" stop-color="#cfc659" /><stop offset="1" stop-color="#d5cb5b" /></linearGradient>
            <radialGradient id="corner" gradientUnits="userSpaceOnUse" cx="868" cy="582" r="72"><stop offset="0" stop-color="#cdc458" /><stop offset=".5" stop-color="#d5cc5b" /><stop offset="1" stop-color="#e6dd64" /></radialGradient>
            <linearGradient id="brown" x1="0" x2="0" y1="0" y2="1"><stop offset="0" stop-color="#aa844d" /><stop offset=".6" stop-color="#6d5231" /><stop offset="1" stop-color="#634a2f" /></linearGradient>
            <linearGradient id="vcube" x1="0" x2="1" y1="0" y2="1"><stop offset="0" stop-color="#bdc4d0" /><stop offset="1" stop-color="#a9afba" /></linearGradient>
          </defs>
          <rect x="163" y="117" width="1117" height="530" fill="url(#sky)" />
          <rect x="163" y="117" width="1117" height="530" fill="url(#skyx)" />
          <rect x="163" y="117" width="694" height="440" fill="#d9cf60" />
          <rect x="857" y="117" width="78" height="440" fill="url(#right)" />
          <rect x="163" y="556" width="695" height="77" fill="url(#low)" />
          <path d="M857 556h78a78 77 0 0 1-78 77z" fill="url(#corner)" />
          <path d="M163 556.500h772M857.500 117v516M163 633.500h695" fill="none" stroke="#8d8424" />
          <path d="M935 117v439a78 77 0 0 1-78 77" fill="none" stroke="#8f8a45" stroke-width=".8" />
          <rect x="935.500" y="110" width="46" height="414.500" fill="#232115" stroke="#665d1e" />
          <rect x="982" y="100" width="15" height="22" fill="#6b502f" />
          <rect x="982" y="228" width="15" height="69" fill="url(#brown)" />
          <rect x="982" y="336" width="15" height="69" fill="url(#brown)" />
          <path d="M997 228v69h-15M997 336v69h-15M997 117v5h-15" fill="none" stroke="#857443" stroke-width=".8" />

          <g>
            <rect x="394.500" y="340.500" width="153" height="153" fill="#d1c24b" stroke="#8f7c20" />
            <circle cx="471.500" cy="417" r="69.500" fill="#b2a88b" stroke="#85793e" />
            <g stroke="#8f7c28" fill="#c9b95a">
              <g><path d="M459.500 451.500h24v30q-12 3-24 0z" fill-opacity=".8" /><path d="M459.500 456h24" fill="none" /><circle cx="471.500" cy="466" r="9" /></g>
              <g transform="rotate(120 471.500 417)"><path d="M459.500 451.500h24v30q-12 3-24 0z" fill-opacity=".8" /><path d="M459.500 456h24" fill="none" /><circle cx="471.500" cy="466" r="9" /></g>
              <g transform="rotate(240 471.500 417)"><path d="M459.500 451.500h24v30q-12 3-24 0z" fill-opacity=".8" /><path d="M459.500 456h24" fill="none" /></g>
            </g>
            <circle cx="513.500" cy="392.500" r="9.700" fill="none" stroke="#f0ec1f" stroke-width="1.500" /><rect x="512.500" y="391.500" width="2.500" height="2.500" fill="#ffff20" />
            <rect x="460" y="347" width="23" height="34" fill="#c9b65b" fill-opacity=".5" />
            <g fill="none" stroke="#7c22d3" stroke-width="1.600"><circle cx="471.500" cy="417" r="58" /><circle cx="471.500" cy="417" r="39.500" /><rect x="460" y="337.500" width="23.500" height="44" /><path d="M460 338l23.500 43m0-43L460 381" stroke-width="1" stroke-dasharray="2 2" /><path d="M469 359h5m-2.500-2.500v5" /></g>
            <path d="M460 382v5m23.500-5v5M461 384.500h4m14 0h4m-18-2.500l-4.500 2.500 4.500 2.500m14-5l4.500 2.500-4.500 2.500" fill="none" stroke="#222" stroke-width=".9" />
            <text x="471.500" y="387.500" class="dim">1.5</text>
            <circle cx="456" cy="417" r="15.300" fill="#251a06" stroke="#f3ed2c" stroke-width="1.500" /><rect x="455" y="415.500" width="2.500" height="2.500" fill="#ffff20" />
            <circle cx="487.500" cy="417" r="11.700" fill="#bcc905" stroke="#94901f" /><rect x="470.500" y="415.500" width="2.500" height="2.500" fill="#7c22c9" />
            <rect x="470" y="632" width="3" height="2.500" fill="#fff321" />
          </g>
          <g><path d="M198.500 611v-12" stroke="#3f8f3a" /><path d="M195 599l3.500-7 3.500 7z" fill="#188a18" /><path d="M199 612.500h14" stroke="#a01810" /><path d="M211 608.500l8 4-8 4z" fill="#980808" /><circle cx="198.300" cy="612.300" r="4" fill="#0a0aa0" /><text x="195.800" y="591" font-size="8" fill="#4fdc28">Y</text><text x="219.500" y="615.500" font-size="8.500" fill="#ee4420">X</text></g>

          <g stroke="#4a515c" fill="none"><path d="M1258.500 122.500h7v6h-7zM1262.500 122v6" /><path d="M1273 122l6 6m0-6l-6 6" stroke-width="1.500" /></g>
          <path d="M1215 195h48l-8-3h-32z" fill="#73829a" opacity=".6" />
          <rect x="1221.500" y="157" width="35.500" height="35.500" fill="url(#vcube)" stroke="#d0d6e0" />
          <rect x="1228" y="163" width="23" height="23" fill="#a5b0bf" opacity=".5" />
          <text x="1239.300" y="178.300" class="front" textLength="28" lengthAdjust="spacingAndGlyphs">FRONTAL</text>
          <g fill="#cfd8e4" stroke="#6e7887">
            <rect x="1257.500" y="214.500" width="22" height="153" rx="3" fill="#b9c6d7" stroke="#73809a" />
            <circle cx="1274.500" cy="218.500" r="2" /><circle cx="1274.500" cy="362" r="2" />
            <path d="M1260 255.500h17" stroke="#91a0b6" />
            <path d="M1268 229h7v7q-1 7-7 7-6-1-6.500-7 .5-6 6.500-7z" /><circle cx="1268" cy="236" r="3.500" />
            <path d="M1265 274l-4-6 2-1 2 2-1-7 1.500-.5 1.500 5v-6.500h1.500l.5 6.500 1.500-5.500 1.500.5-1 6 2-3 1.300 1-3.300 8.500z" />
            <path d="M1261.500 281.500h6l3 3v10h-9z" /><circle cx="1269" cy="289" r="3.500" /><path d="M1271.500 291.500l4 4" stroke-width="1.500" />
            <ellipse cx="1268" cy="317" rx="6.500" ry="2.500" fill="none" /><ellipse cx="1268" cy="317" rx="2.500" ry="6.500" fill="none" /><path d="M1266 315l-1.500 2 1.500 2m6-4.500l2.500 2-2.500 2" />
            <path d="M1261.500 341.500h14v10h-14z" /><path d="M1264 344.500h9v4.500h-9z" fill="#a9b6c8" /><path d="M1263 341v-3h5l3-2v5" />
            <path d="M1266.500 250h3l-1.500 1.500zM1266.500 303h3l-1.500 1.500zM1266.500 331h3l-1.500 1.500z" fill="#445" stroke="none" />
          </g>
        </svg>
        <div class="doctabs">
          <div class="dt sel"><span v-fit="54">PAQARIY.ipt</span><svg class="ic" width="8" height="8"><use href="#i-xs" /></svg></div>
          <span v-fit="87">PAQARIY - copia.ipt</span>
          <i class="grow"></i>
          <svg class="ic" width="12" height="12"><use href="#i-bars" /></svg>
        </div>
      </section>
    </main>

    <footer class="status">
      <span v-fit="20" class="ready">Listo</span>
      <div><span v-fit="100">-12.047 mm, 6.175 mm</span></div>
      <div><span v-fit="71">Restricción total</span></div>
      <div><span v-fit="5">1</span></div>
      <div><span v-fit="6">2</span></div>
    </footer>

    <footer class="taskbar">
      <div class="start"><svg class="ic" width="14" height="14" viewBox="0 0 14 14"><path d="M1 2l5-.8v5.300H1zM7 1l6-1v6.500H7zM1 7.500h5v5.300L1 12zM7 7.500h6V14l-6-1z" fill="#f4f4f4" /></svg></div>
      <div class="tsearch"><svg class="ic" width="15" height="15" viewBox="0 0 15 15"><circle cx="9" cy="5.500" r="4.300" fill="none" stroke="#333" stroke-width="1.200" /><path d="M6 8.800L1 14" stroke="#333" stroke-width="1.300" /></svg><span v-fit="138">Escribe aquí para buscar</span></div>
      <div v-for="a in apps" :key="a.i" :class="['app-btn', a.c]"><svg class="ic" width="20" height="20"><use :href="'#i-' + a.i" /><text v-if="a.badge" x="13.500" y="16.500" class="badge">{{ a.badge }}</text></svg></div>
      <div class="tray">
        <svg class="ic" width="12" height="8"><path d="M1 7l5-5 5 5" fill="none" stroke="#eee" stroke-width="1.200" /></svg>
        <svg class="ic" width="12" height="12"><path d="M1 11A10 10 0 0 1 11 1M3.500 11A7.500 7.500 0 0 1 11 3.800M6 11a5 5 0 0 1 5-4.500" fill="none" stroke="#ddd" /><circle cx="9.500" cy="10" r="1.300" fill="#eee" /></svg>
        <svg class="ic" width="14" height="10"><path d="M3 9q-3-.5-2.500-3Q2 4 3.500 4.500 5 .5 8.500 1.500q2 1 2 3 3 0 3 2.300T11 9z" fill="#f0f0f0" /></svg>
        <svg class="ic" width="14" height="8"><path d="M1 1h11v6H1z" fill="none" stroke="#eee" /><path d="M2.500 2.500h8v3h-8zM12 3h1.500v2H12z" fill="#fff" /></svg>
        <svg class="ic" width="14" height="12"><path d="M1 4h2.500l3-3v10l-3-3H1zM8.500 4q1.500 2 0 4" fill="none" stroke="#eee" /><path d="M10.500 2.500q2.500 3.500 0 7M12.300 1q3 5 0 10" fill="none" stroke="#88939a" /></svg>
        <span v-fit="16">ESP</span>
        <div class="clock"><span v-fit="24">20:38</span><span v-fit="51">14/10/2020</span></div>
        <svg class="ic" width="22" height="22"><path d="M1 2h13v10H7l-3 3v-3H1z" fill="#fff" /><path d="M3.500 5h8M3.500 7.500h8M3.500 10h5" stroke="#25333a" /><circle cx="14" cy="15" r="6" fill="#30393c" stroke="#9ba1a3" /><text x="14" y="18.500" font-size="9.500" text-anchor="middle" fill="#fff">1</text></svg>
        <i class="edge"></i>
      </div>
    </footer>
  </div>
</template>

<style>
html, body { margin: 0; overflow: hidden; background: #eee; }
</style>

<style scoped>
.app { width: 1280px; height: 720px; overflow: hidden; display: flex; flex-direction: column; background: #f5f5f5; color: #444; font: 10.5px/14px "Open Sans", "Noto Sans", sans-serif; }
.defs { position: absolute; }
.ic { display: block; flex: none; }
span { display: inline-block; flex: none; white-space: nowrap; transform-origin: 0 50%; }
.grow { flex: 1; }

.title { height: 20px; flex: none; display: grid; grid-template-columns: 607px 260px 9px 150px 254px; background: #d9d9d9; color: #444; align-items: start; }
.quick { height: 18px; display: grid; grid-template-columns: 20px 24px 8px 20px 20px 20px 10px 20px 10px 6px 20px 20px 12px 16px 12px 18px 22px 84px 18px 86px 18px 20px 20px 20px 12px; align-items: center; justify-items: center; }
.pro { font: 700 4.500px "Open Sans", sans-serif; fill: #333; }
.q { font: 700 11px "Open Sans", sans-serif; text-anchor: middle; fill: #2b5cae; }
.q-sep { justify-self: end; }
.q-link, .q-redo { opacity: .9; }
.combo { justify-self: end; box-sizing: border-box; width: 83px; height: 18px; display: flex; align-items: center; justify-content: space-between; padding: 0 2px 0 5px; background: #fafafa; color: #333; }
.mat { width: 84px; padding: 0 2px 0 3px; gap: 3px; }
.mat .ic:last-child { margin-left: auto; }
.fx { font: italic 15px/16px "Liberation Serif", serif; color: #555; }
.docname { display: flex; gap: 10px; padding-top: 2px; }
.tri { margin-top: 5px; }
.help-search { height: 17px; background: #fafafa; padding-left: 4px; line-height: 17px; box-sizing: border-box; }
.account { height: 18px; display: grid; grid-template-columns: 18px 63px 22px 16px 12px 18px 12px 53px 20px 20px; align-items: center; justify-items: center; }
.account .min { justify-self: end; margin-right: 4px; }
.account span { justify-self: start; margin-left: 3px; }

.tabs { height: 18px; flex: none; display: flex; background: #d8d8d8; color: #777; line-height: 18px; align-items: stretch; }
.tabs > div { display: flex; align-items: center; }
.tabs span { padding-top: 1px; }
.file { width: 47px; justify-content: center; background: #fb9b1f; color: #fff3e0; }
.tabs > .file { height: 17px; margin-top: 1px; }
.on { width: 65px; margin-left: 2px; justify-content: center; background: #f5f5f5; color: #444; }
.rest { padding-left: 9px; gap: 16.200px; }
.rb { margin-left: 9px; }
.rc { margin-left: -14px; }

.ribbon { height: 79px; flex: none; display: flex; background: #f5f5f5; border-bottom: 1px solid #e6e6e6; box-sizing: border-box; }
.panel { box-sizing: border-box; display: flex; flex-direction: column; border-right: 1px solid #dcdcdc; }
.body { height: 67px; flex: none; display: flex; align-items: flex-start; box-sizing: border-box; padding-top: 3px; }
.label { display: flex; align-items: center; justify-content: center; height: 11px; line-height: 11px; gap: 5px; }
.big { display: flex; flex-direction: column; align-items: center; padding-top: 1px; line-height: 13px; }
.big span:first-of-type { margin-top: 3px; }
.one span:first-of-type { margin-top: 2px; }
.big .dn { margin-top: 0; }
.col { display: grid; grid-auto-rows: 18px; row-gap: 2.600px; align-content: start; }
.cmd { display: flex; align-items: center; gap: 3px; }
.btn { width: 18px; height: 18px; box-sizing: border-box; border: 1px solid #d2d2d2; background: #fbfbfb; display: flex; align-items: center; justify-content: center; }
.p-sketch { width: 69px; }
.p-sketch .body { padding-left: 10px; }
.sc { margin: 43px 0 0 2px; }
.p-create { width: 313px; }
.p-create .body { display: grid; grid-template-columns: 34px 54px 74px 70px 78px; align-content: start; }
.p-create .col { padding-left: 2px; }
.c2 .cmd { gap: 4px; }
.m1 .cmd { gap: 4px; }
.p-modify { width: 364px; }
.p-modify .body { display: grid; grid-template-columns: 42px 46px 101px 114px 56px; align-content: start; }
.p-modify .col { padding-left: 2px; }
.p-modify .col:last-child .cmd { gap: 4px; }
.del { margin-left: -1px; }
.p-explore { width: 56px; }
.p-explore .body, .p-sim .body, .p-conv .body { justify-content: center; }
.p-work { width: 113px; }
.p-work .body { padding-left: 17px; }
.p-work .big { width: 28px; margin-right: 9px; }
.p-work .cmd { padding-left: 2px; }
.ec { margin-left: 3px; }
.split { display: flex; }
.split div { box-sizing: border-box; width: 19px; height: 18px; border: 1px solid #d2d2d2; display: flex; align-items: center; justify-content: center; background: #fbfbfb; }
.split div + div { width: 11px; border-left: 0; }
.p-pattern { width: 46px; }
.grid2 { display: grid; grid-template-columns: 19px 19px; grid-auto-rows: 18px; gap: 2.600px 2px; padding-left: 2px; align-content: start; }
.grid2 .btn, .grid3 .btn { width: 19px; }
.first { grid-column: 1; }
.p-free { width: 84px; }
.p-free .body { padding-left: 17px; }
.p-free .big { margin-right: 5px; }
.p-free .btn { width: 20px; }
.p-surface { width: 67px; }
.grid3 { display: grid; grid-template-columns: 19px 19px 19px; grid-auto-rows: 18px; gap: 2.600px 2px; padding-left: 1px; align-content: start; }
.p-sim { width: 57px; }
.p-conv { width: 63px; }
.more { margin: 3px 0 0 1px; width: 28px; height: 18px; box-sizing: border-box; border: 1px solid #d2d2d2; background: #fafafa; display: flex; align-items: center; justify-content: space-evenly; }

.work { height: 551px; flex: none; display: flex; }
.browser { width: 163px; box-sizing: border-box; border-right: 2px solid #b9b9b9; display: flex; flex-direction: column; background: #f5f5f5; }
.bhead { height: 17px; flex: none; display: flex; align-items: center; gap: 5px; padding-right: 3px; background: #d8d8d8; font-size: 9px; }
.btab { width: 44px; height: 17px; box-sizing: border-box; padding-left: 2px; display: flex; align-items: center; gap: 6px; background: #f5f5f5; }
.bbody { height: 534px; display: flex; }
.tree { flex: 1; overflow: hidden; font: 8.700px/16px "DejaVu Sans", sans-serif; color: #222; }
.node { height: 16.680px; display: flex; align-items: center; }
.node span { margin: 1px 0 0 2px; }
.root { padding-left: 2px; }
.root span { margin-left: 3px; }
.scroll { width: 15px; display: flex; flex-direction: column; align-items: center; background: #ececec; padding: 5px 0 4px; box-sizing: border-box; }
.thumb { width: 14px; height: 391px; background: #cbcbcb; margin: 3px 0 auto; }

.stage { width: 1117px; display: flex; flex-direction: column; }
.view { display: block; flex: none; font-family: "Open Sans", sans-serif; }
.dim { font: 7.500px "Liberation Sans", sans-serif; text-anchor: middle; fill: #222; }
.front { font: 700 8px "Open Sans", sans-serif; text-anchor: middle; fill: #727a87; }
.doctabs { height: 20px; display: flex; align-items: center; padding-right: 3px; background: #d8d8d8; color: #777; }
.doctabs > span { margin-top: -3px; }
.dt { box-sizing: border-box; width: 83px; height: 20px; padding: 0 9px 2px 7px; margin-right: 7px; display: flex; align-items: center; justify-content: space-between; background: #f5f5f5; border-bottom: 2px solid #37a0cf; color: #2f97cb; }

.status { height: 19px; flex: none; display: flex; align-items: center; background: #efefef; box-sizing: border-box; color: #333; }
.status span { margin-top: 1px; }
.ready { margin-right: auto; color: #555; }
.status div { box-sizing: border-box; height: 18px; display: flex; align-items: center; border-left: 1px solid #d9d9d9; }
.status div:nth-child(2) { width: 108px; padding-left: 5px; }
.status div:nth-child(3) { width: 76px; padding-left: 2px; }
.status div:nth-child(4) { width: 26px; padding-left: 6px; }
.status div:nth-child(5) { width: 25px; padding-left: 4px; }

.taskbar { height: 33px; flex: none; display: flex; background: linear-gradient(90deg, #22343d 0, #22343d 50%, #20313a 64%, #2b2a27 75%, #20303a 84%, #1d323c 100%); color: #eee; }
.start { width: 40px; display: flex; align-items: center; justify-content: center; }
.tsearch { box-sizing: border-box; width: 287px; margin-right: 1px; padding-left: 10px; gap: 9px; display: flex; align-items: center; background: #f2f2f2; border: 1px solid #c8c8c8; border-left: 0; color: #333; font-size: 13px; }
.tsearch span { margin-top: -1px; }
.app-btn { box-sizing: border-box; width: 41.500px; display: flex; align-items: center; justify-content: center; border-bottom: 2px solid transparent; padding-top: 1px; }
.badge { font: 8px "Open Sans", sans-serif; text-anchor: middle; fill: #ddd; }
.run { border-image: linear-gradient(90deg, transparent 10%, #76b9ed 10%, #76b9ed 90%, transparent 90%) 2; }
.alert { background: #a5652f; border-bottom-color: #f77708; }
.active { background: #56636a; border-bottom-color: #76b9ed; }
.tray { margin-left: auto; display: grid; grid-template-columns: 20px 20px 19px 21px 17px 35px 57px 42px 4px; align-items: center; justify-items: center; width: 235px; }
.clock { display: flex; flex-direction: column; align-items: center; line-height: 15px; }
.edge { justify-self: start; width: 1px; height: 33px; background: #7e888c; }
</style>
